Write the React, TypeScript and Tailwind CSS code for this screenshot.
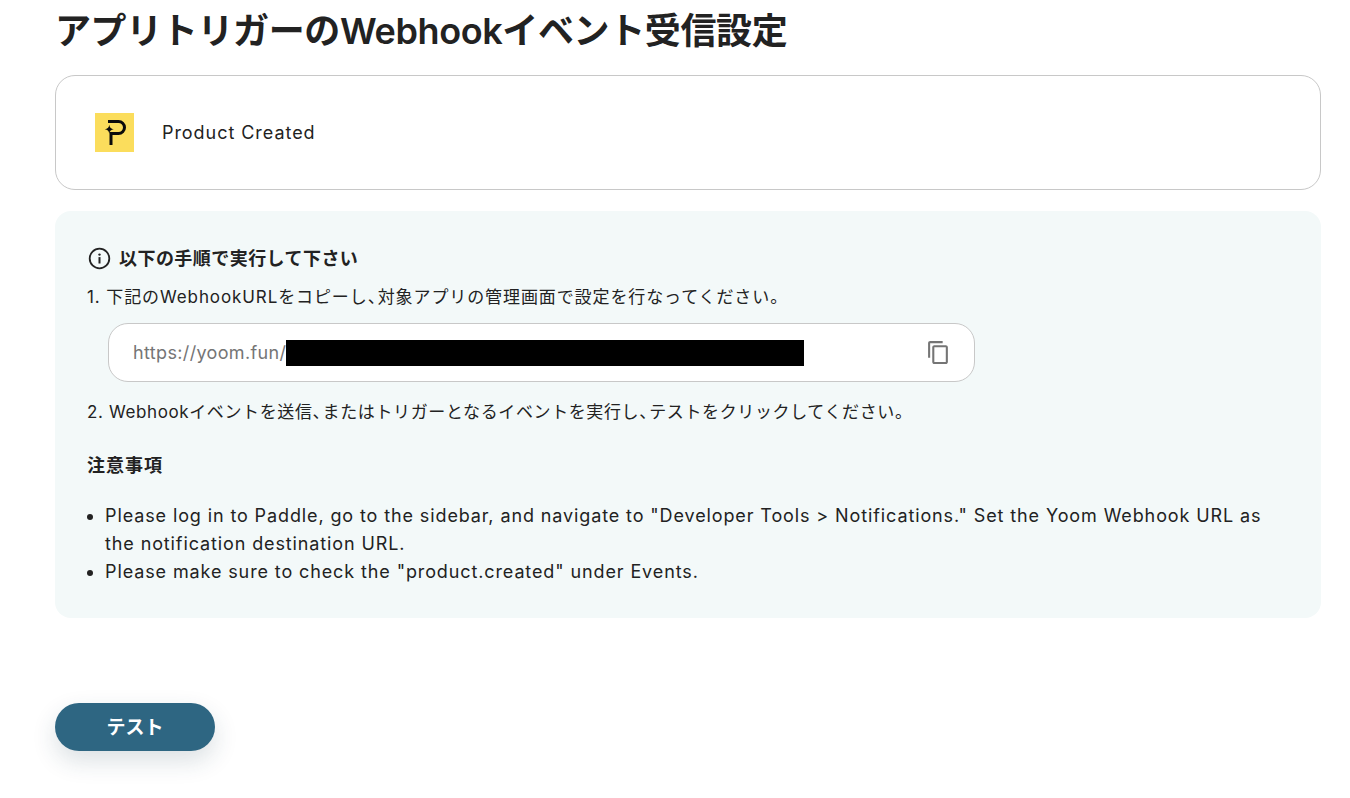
import React from 'react';

const font = { fontFamily: 'Inter, "Noto Sans CJK JP", sans-serif' };

const PaddleLogo = () => (
  <svg width="39" height="39" viewBox="0 0 39 39" className="shrink-0">
    <rect width="39" height="39" fill="#fbdd5c" />
    <path d="M13 8.500h10.500a6 6 0 0 1 0 12H16V32" fill="none" stroke="#0b0b0b" strokeWidth="3" />
    <path d="M14.300 11.800c.6 3 1.500 3.900 4.500 4.500-3 .6-3.900 1.500-4.500 4.500-.6-3-1.500-3.900-4.500-4.500 3-.6 3.900-1.500 4.500-4.500z" fill="#0b0b0b" />
  </svg>
);

const InfoIcon = () => (
  <svg width="23" height="23" viewBox="0 0 23 23" fill="none" className="shrink-0">
    <circle cx="11.500" cy="11.500" r="9.800" stroke="#222" strokeWidth="1.800" />
    <circle cx="11.500" cy="7.600" r="1.200" fill="#222" />
    <rect x="10.500" y="10.100" width="2" height="6.400" fill="#222" />
  </svg>
);

const CopyIcon = () => (
  <svg width="25" height="25" viewBox="0 0 24 24" fill="#757575" className="shrink-0">
    <path d="M16 1H4c-1.100 0-2 .9-2 2v14h2V3h12V1zm3 4H8c-1.100 0-2 .9-2 2v14c0 1.100.9 2 2 2h11c1.100 0 2-.9 2-2V7c0-1.100-.9-2-2-2zm0 16H8V7h11v14z" />
  </svg>
);

const Comma = () => <span className="tracking-[-8px] mr-[1px]">、</span>;

export default function App() {
  return (
    <div className="min-h-[798px] bg-white px-[55px] pr-[29px] text-[#222222] overflow-hidden" style={font}>
      <h1 className="text-[36px] leading-[62px] font-semibold tracking-[-0.38px]">アプリトリガーのWebhookイベント受信設定</h1>

      {/* App / event */}
      <div className="mt-[13px] h-[115px] border border-[#c8c8c8] rounded-[20px] flex items-center pl-[39px] gap-[28px]">
        <PaddleLogo />
        <span className="text-[18px] tracking-[0.95px]">Product Created</span>
      </div>

      {/* Instructions */}
      <div className="mt-[21px] h-[407px] bg-[#f3f9f9] rounded-[16px] pl-[32px] pr-[32px] pt-[35px] text-[17px]">
        <div className="flex items-center gap-[8px] h-[24px] pl-[1px] font-bold text-[18px] tracking-[0.45px]">
          <InfoIcon />
          <span>以下の手順で実行して下さい</span>
        </div>
        <p className="mt-[15px] leading-[24px] tracking-[0.9px]">1. 下記のWebhookURLをコピーし<Comma />対象アプリの管理画面で設定を行なってください。</p>
        <div className="mt-[14px] ml-[21px] w-[867px] h-[59px] bg-white border border-[#c8c8c8] rounded-[20px] flex items-center pl-[24px] pr-[23px] justify-between">
          <div className="flex items-center text-[#757575] text-[18px] tracking-[0.35px]">
            <span>https://yoom.fun/</span>
            <span className="block w-[518px] h-[26px] bg-black" />
          </div>
          <CopyIcon />
        </div>
        <p className="mt-[18px] leading-[24px] tracking-[0.62px]">2. Webhookイベントを送信<Comma />またはトリガーとなるイベントを実行し<Comma />テストをクリックしてください。</p>
        <p className="mt-[30px] leading-[24px] font-bold text-[18px] tracking-[1px]">注意事項</p>
        <ul className="mt-[24px] list-disc pl-[18px] text-[18px] leading-[28px] tracking-[0.885px]">
          <li>Please log in to Paddle, go to the sidebar, and navigate to "Developer Tools &gt; Notifications." Set the Yoom Webhook URL as the notification destination URL.</li>
          <li>Please make sure to check the "product.created" under Events.</li>
        </ul>
      </div>

      <button className="block mt-[85px] w-[160px] h-[48px] pt-[2px] rounded-full bg-[#2e6682] text-white text-[19px] font-semibold shadow-[0_10px_24px_rgba(30,60,80,0.16)]">
        テスト
      </button>
    </div>
  );
}
